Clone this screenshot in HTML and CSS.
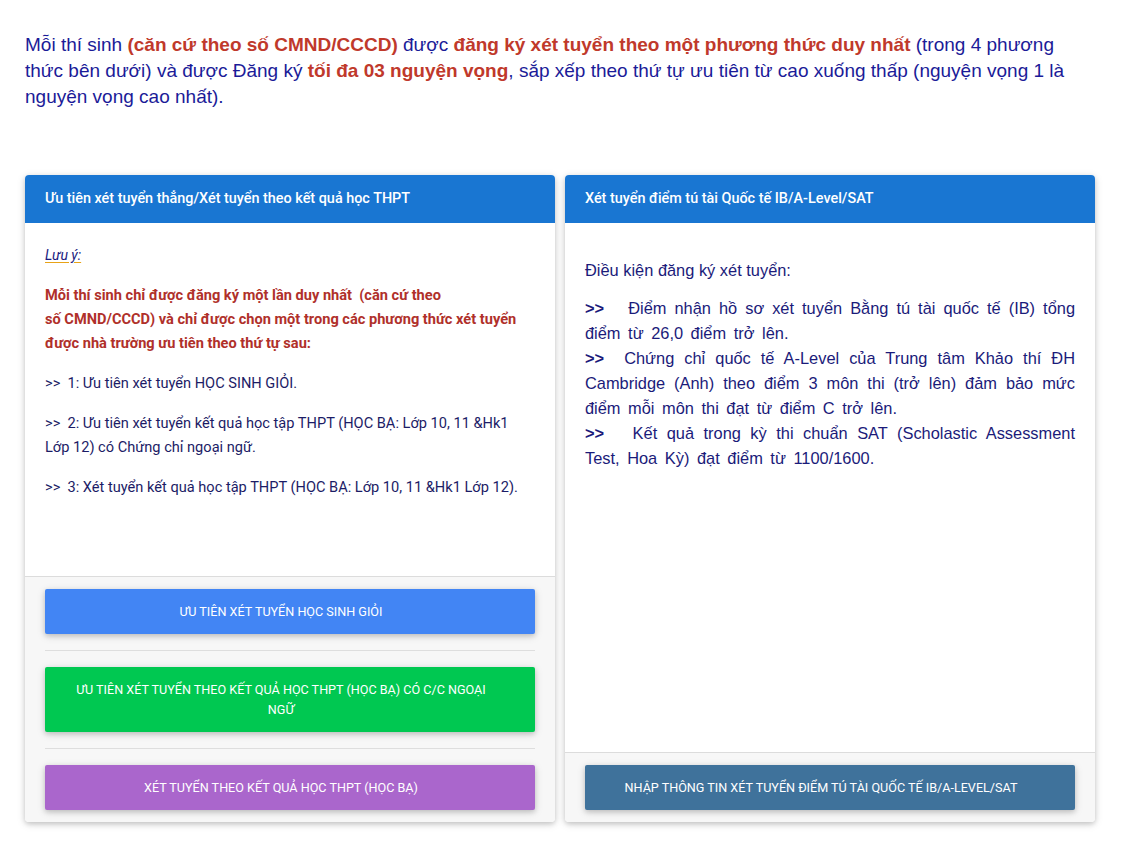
FILE: index.html
```html
<!DOCTYPE html>
<html lang="vi">
<head>
<meta charset="utf-8">
<title>Đăng ký xét tuyển</title>
<link rel="stylesheet" href="styles.css">
</head>
<body>
<div class="page">
  <p class="intro">Mỗi thí sinh <b class="hl">(căn cứ theo số CMND/CCCD)</b> được <b class="hl">đăng ký xét tuyển theo một phương thức duy nhất</b> (trong 4 phương thức bên dưới) và được Đăng ký <b class="hl">tối đa 03 nguyện vọng</b>, sắp xếp theo thứ tự ưu tiên từ cao xuống thấp (nguyện vọng 1 là nguyện vọng cao nhất).</p>

  <div class="cards">
    <div class="card">
      <div class="card-header">Ưu tiên xét tuyển thẳng/Xét tuyển theo kết quả học THPT</div>
      <div class="card-body left-body">
        <p class="note"><em>Lưu ý:</em></p>
        <p class="warn">Mỗi thí sinh chỉ được đăng ký một lần duy nhất&nbsp; (căn cứ theo<br>số CMND/CCCD) và chỉ được chọn một trong các phương thức xét tuyển được nhà trường ưu tiên theo thứ tự sau:</p>
        <p>&gt;&gt;&nbsp; 1: Ưu tiên xét tuyển HỌC SINH GIỎI.</p>
        <p>&gt;&gt;&nbsp; 2: Ưu tiên xét tuyển kết quả học tập THPT (HỌC BẠ: Lớp 10, 11 &amp;Hk1 Lớp 12) có Chứng chỉ ngoại ngữ.</p>
        <p>&gt;&gt;&nbsp; 3: Xét tuyển kết quả học tập THPT (HỌC BẠ: Lớp 10, 11 &amp;Hk1 Lớp 12).</p>
      </div>
      <div class="card-footer">
        <a class="btn btn-blue">Ưu tiên xét tuyển học sinh giỏi</a>
        <hr class="sep">
        <a class="btn btn-green">Ưu tiên xét tuyển theo kết quả học THPT (học bạ) có C/C ngoại ngữ</a>
        <hr class="sep">
        <a class="btn btn-purple">Xét tuyển theo kết quả học THPT (học bạ)</a>
      </div>
    </div>

    <div class="card">
      <div class="card-header">Xét tuyển điểm tú tài Quốc tế IB/A-Level/SAT</div>
      <div class="card-body right-body">
        <p class="cond">Điều kiện đăng ký xét tuyển:</p>
        <p class="just"><b>&gt;&gt;</b>&nbsp;&nbsp; Điểm nhận hồ sơ xét tuyển Bằng tú tài quốc tế (IB) tổng điểm từ 26,0 điểm trở lên.<br><b>&gt;&gt;</b>&nbsp; Chứng chỉ quốc tế A-Level của Trung tâm Khảo thí ĐH Cambridge (Anh) theo điểm 3 môn thi (trở lên) đảm bảo mức điểm mỗi môn thi đạt từ điểm C trở lên.<br><b>&gt;&gt;</b>&nbsp;&nbsp; Kết quả trong kỳ thi chuẩn SAT (Scholastic Assessment Test, Hoa Kỳ) đạt điểm từ 1100/1600.</p>
      </div>
      <div class="card-footer">
        <a class="btn btn-steel">Nhập thông tin xét tuyển điểm tú tài quốc tế IB/A-Level/SAT</a>
      </div>
    </div>
  </div>
</div>
</body>
</html>
```

FILE: styles.css
```css
html, body {
  margin: 0;
  padding: 0;
  background: #ffffff;
}

.page {
  padding: 32px 29px 18px 25px;
}

.intro {
  margin: 0 0 65px 0;
  max-width: 1055px;
  font-family: "Liberation Sans", Arial, sans-serif;
  font-size: 19px;
  line-height: 26px;
  color: #1b1b98;
}

.intro .hl {
  color: #c0392b;
  font-weight: bold;
}

.cards {
  display: grid;
  grid-template-columns: 530px 530px;
  gap: 10px;
  align-items: stretch;
}

.card {
  display: flex;
  flex-direction: column;
  background: #ffffff;
  border-radius: 4px;
  overflow: hidden;
  box-shadow: 0 2px 5px 0 rgba(0, 0, 0, 0.16), 0 2px 10px 0 rgba(0, 0, 0, 0.12);
}

.card-header {
  background: #1976d2;
  color: #ffffff;
  font-family: Roboto, "Noto Sans", sans-serif;
  font-size: 14.4px;
  font-weight: 500;
  line-height: 24px;
  padding: 12px 20px;
}

.card-body {
  flex: 1;
  padding: 20px;
}

.left-body {
  box-sizing: border-box;
  min-height: 353px;
  font-family: Roboto, "Noto Sans", sans-serif;
  font-size: 14.6px;
  line-height: 24px;
  color: #1c1c66;
}

.left-body p {
  margin: 0 0 16px 0;
}

.note em {
  font-style: italic;
  font-size: 14px;
  color: #1c1c80;
  text-decoration: underline;
  text-decoration-color: #e8a317;
  text-underline-offset: 2px;
}

.left-body .warn {
  color: #b0302a;
  font-weight: bold;
}

.right-body {
  font-family: "Liberation Sans", Arial, sans-serif;
  font-size: 16.4px;
  line-height: 25px;
  color: #1b1b7a;
  padding-top: 35px;
}

.right-body p {
  margin: 0 0 13px 0;
}

.right-body .just {
  text-align: justify;
  word-spacing: 3px;
}

.card-footer {
  background: #f7f7f7;
  border-top: 1px solid #dcdcdc;
  padding: 12px 20px;
}

.btn {
  display: block;
  text-align: center;
  text-transform: uppercase;
  font-family: Roboto, "Noto Sans", sans-serif;
  font-size: 12.6px;
  line-height: 20px;
  color: #ffffff;
  padding: 12.5px 42px 12.5px 24px;
  border-radius: 2px;
  box-shadow: 0 2px 5px 0 rgba(0, 0, 0, 0.16), 0 2px 10px 0 rgba(0, 0, 0, 0.12);
  cursor: pointer;
}

.btn-blue { background: #4285f4; }
.btn-green { background: #00c851; }
.btn-purple { background: #aa66cc; }
.btn-steel { background: #3f729b; }

.sep {
  border: 0;
  border-top: 1px solid #dedede;
  margin: 16px 0;
  height: 0;
}
```
